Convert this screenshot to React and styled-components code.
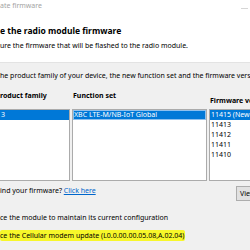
import React from "react";
import styled, { createGlobalStyle } from "styled-components";

const GlobalStyle = createGlobalStyle`
  html, body {
    margin: 0;
    padding: 0;
    background: #f0f0f0;
    overflow: hidden;
  }
`;

const Window = styled.div`
  width: 280px;
  height: 250px;
  overflow: hidden;
  font-family: "Noto Sans", "Open Sans", sans-serif;
  font-size: 7px;
  color: #000;
  background: #f0f0f0;
`;

const Header = styled.header`
  height: 62px;
  background: #fff;
  border-bottom: 1px solid #e3e3e3;
`;

const TitleBar = styled.div`
  height: 12px;
  display: flex;
  align-items: center;
  justify-content: space-between;
  padding-right: 32px;
`;

const Title = styled.span`
  line-height: 12px;
  color: #a3a3a3;
`;

const Minimize = styled.span`
  width: 7px;
  height: 1px;
  margin-top: 4px;
  background: #d6d6d6;
`;

const Heading = styled.h1`
  margin: 13px 0 0;
  font-size: 8.5px;
  line-height: 12px;
  font-weight: 700;
`;

const Subtitle = styled.p`
  margin: 3px 0 0;
  line-height: 11px;
`;

const Body = styled.section`
  padding-top: 7px;
`;

const Instruction = styled.p`
  margin: 0;
  line-height: 11px;
  white-space: nowrap;
`;

const Columns = styled.div`
  margin-top: 9px;
  display: grid;
  grid-template-columns: 70px 135px 1fr;
  column-gap: 2px;
`;

const Column = styled.div`
  display: flex;
  flex-direction: column;
  min-width: 0;
`;

const ColumnLabel = styled.div`
  font-weight: 700;
  line-height: 11px;
  padding-left: ${(p) => p.$indent}px;
  margin-top: ${(p) => p.$drop}px;
  margin-bottom: ${(p) => 8 - p.$drop}px;
  white-space: nowrap;
`;

const ListBox = styled.div`
  height: 70px;
  background: #fff;
  border: 1px solid #ababab;
  border-left-width: ${(p) => (p.$clipped ? 0 : 1)}px;
  overflow: hidden;
`;

const Item = styled.div`
  height: 10px;
  line-height: 10px;
  padding-left: 1px;
  white-space: nowrap;
  background: ${(p) => (p.$selected ? "#0078d7" : "transparent")};
  color: ${(p) => (p.$selected ? "#fff" : "#000")};
  box-shadow: ${(p) => (p.$focused ? "inset 0 0 0 1px #8ec0ee" : "none")};
`;

const Footer = styled.div`
  margin-top: 4px;
  display: flex;
  justify-content: space-between;
  align-items: flex-start;
`;

const HelpText = styled.span`
  line-height: 11px;
`;

const Link = styled.a`
  color: #0066cc;
  text-decoration: underline;
  cursor: pointer;
`;

const Button = styled.button`
  width: 44px;
  height: 15px;
  margin-top: 1px;
  padding: 0 0 0 3px;
  text-align: left;
  font: inherit;
  color: #000;
  background: #e1e1e1;
  border: 1px solid #adadad;
`;

const Option = styled.p`
  margin: ${(p) => p.$gap}px 0 0;
  line-height: 11px;
  white-space: nowrap;
`;

const Marker = styled.mark`
  color: #000;
  background: #f7f72a;
  padding: 1px 1px 1px 0;
  border-radius: 2px;
`;

const versions = ["11415 (Newest)", "11413", "11412", "11411", "11410"];

export default function App() {
  return (
    <Window>
      <GlobalStyle />
      <Header>
        <TitleBar>
          <Title>ate firmware</Title>
          <Minimize />
        </TitleBar>
        <Heading>e the radio module firmware</Heading>
        <Subtitle>ure the firmware that will be flashed to the radio module.</Subtitle>
      </Header>
      <Body>
        <Instruction>
          he product family of your device, the new function set and the firmware version
        </Instruction>
        <Columns>
          <Column>
            <ColumnLabel $drop={0} $indent={0}>roduct family</ColumnLabel>
            <ListBox $clipped>
              <Item $selected>3</Item>
            </ListBox>
          </Column>
          <Column>
            <ColumnLabel $drop={0} $indent={1}>Function set</ColumnLabel>
            <ListBox>
              <Item $selected $focused>XBC LTE-M/NB-IoT Global</Item>
            </ListBox>
          </Column>
          <Column>
            <ColumnLabel $drop={5} $indent={1}>Firmware version</ColumnLabel>
            <ListBox>
              {versions.map((v, i) => (
                <Item key={v} $selected={i === 0}>{v}</Item>
              ))}
            </ListBox>
          </Column>
        </Columns>
        <Footer>
          <HelpText>
            ind your firmware? <Link>Click here</Link>
          </HelpText>
          <Button>View</Button>
        </Footer>
        <Option $gap={11}>ce the module to maintain its current configuration</Option>
        <Option $gap={7}>
          <Marker>ce the Cellular modem update (L0.0.00.00.05.08,A.02.04)</Marker>
        </Option>
      </Body>
    </Window>
  );
}
